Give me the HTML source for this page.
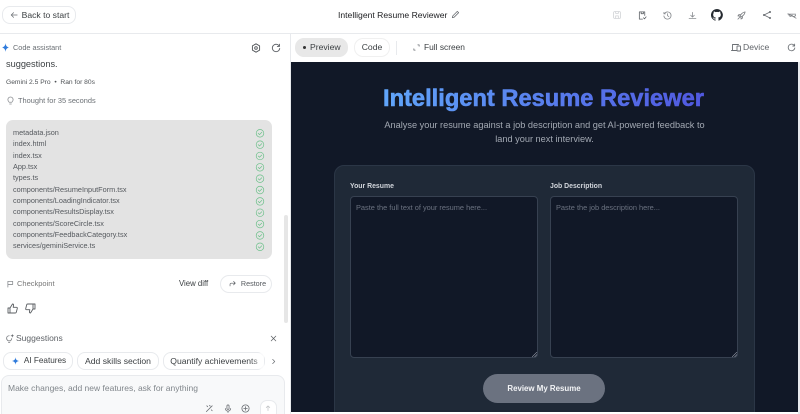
<!DOCTYPE html>
<html><head><meta charset="utf-8"><style>
html,body{margin:0;padding:0;width:800px;height:414px;overflow:hidden;background:#fff}
body{font-family:"Liberation Sans",sans-serif;position:relative}
#w{position:absolute;left:0;top:0;width:800px;height:414px;filter:blur(.3px)}
.a{position:absolute;white-space:nowrap}
svg{position:absolute;fill:none;stroke:#6b6f74;stroke-width:.9;stroke-linecap:round;stroke-linejoin:round}
.btn{position:absolute;box-sizing:border-box;border:1px solid #e8eaed;border-radius:9px;background:#fff;white-space:nowrap;text-align:center;color:#3c4043}
.f{left:13px;font-size:7.3px;color:#55595e;line-height:11px}
.ta{position:absolute;box-sizing:border-box;top:196px;width:188px;height:162px;background:#111827;border:1px solid #374151;border-radius:4px;color:#6b7280;font-size:7.4px;padding:6px 5px;white-space:nowrap}
.lab{position:absolute;top:183px;font-size:6.9px;font-weight:bold;color:#d1d5db;white-space:nowrap}
</style></head><body><div id="w">
<!-- top bar -->
<div class="btn" style="left:2px;top:6px;width:74px;height:18px;line-height:16px;font-size:8.6px;padding-left:13px;border-radius:8px">Back to start</div>
<svg style="left:10px;top:11px" width="8" height="8" viewBox="0 0 10 10"><path d="M9 5H1.500M4.500 2L1.500 5l3 3"/></svg>
<div class="a" style="left:338px;top:10px;font-size:8.6px;color:#202124">Intelligent Resume Reviewer</div>
<svg style="left:451px;top:10px;stroke:#6b6f74" width="9" height="9" viewBox="0 0 10 10"><path d="M1.500 8.500l.5-2L7 1.500 8.500 3 3.500 8z"/></svg>
<!-- top right icons -->
<svg style="left:613px;top:11px;stroke:#d0d2d5" width="8" height="8" viewBox="0 0 9 9"><rect x=".7" y=".7" width="7.600" height="7.600" rx="1"/><path d="M3 .7v2h3v-2M3 8.300V5.500h3v2.800"/></svg>
<svg style="left:638px;top:11px;stroke:#5f6368" width="9" height="9" viewBox="0 0 10 10"><path d="M5 9H1.500V1h6v4M3.500 1v2h2.500V1M6 7.500l1.200 1.200L9 6.500"/></svg>
<svg style="left:663px;top:11px;stroke:#8a8d91" width="9" height="9" viewBox="0 0 10 10"><path d="M1.500 3A4 4 0 1 1 1 5.500M1 1.500V3.200h1.700M5 3v2.200l1.500 1"/></svg>
<svg style="left:688px;top:11px;stroke:#8a8d91" width="9" height="9" viewBox="0 0 10 10"><path d="M5 1.500v5M3 4.700l2 2 2-2M1.200 8.500h7.600"/></svg>
<svg style="left:711px;top:9px;width:12px;height:12px;fill:#24292f;stroke:none" viewBox="0 0 16 16"><path d="M8 0a8 8 0 0 0-2.500 15.600c.4.100.5-.2.500-.4v-1.400c-2.200.5-2.700-1-2.700-1-.4-.9-.9-1.200-.9-1.200-.7-.5.100-.5.100-.5.800.100 1.200.8 1.200.8.700 1.200 1.900.9 2.300.7.100-.5.300-.9.500-1.100-1.800-.2-3.600-.9-3.600-4 0-.9.300-1.600.8-2.100-.1-.2-.4-1 .1-2.100 0 0 .7-.2 2.200.8a7.700 7.700 0 0 1 4 0c1.500-1 2.200-.8 2.200-.8.400 1.100.2 1.900.1 2.100.5.600.8 1.300.8 2.100 0 3.100-1.900 3.700-3.700 3.900.3.300.6.800.6 1.500v2.200c0 .2.100.5.600.4A8 8 0 0 0 8 0z"/></svg>
<svg style="left:737px;top:11px;stroke:#7a7d81" width="9" height="9" viewBox="0 0 10 10"><path d="M3 7c1-3 3-5.500 6-6-.4 3-3 5-6 6zM4 4H2L1 5.500h2M6 6v2l-1.500 1V7M2.500 7.500L1 9"/></svg>
<svg style="left:762px;top:10px;stroke:#6b6f74" width="10" height="10" viewBox="0 0 10 10"><path d="M8 2L2 5l6 3"/><circle cx="8" cy="2" r=".6"/><circle cx="2" cy="5" r=".6"/><circle cx="8" cy="8" r=".6"/></svg>
<svg style="left:787px;top:11px;stroke:#7a7d81" width="10" height="9" viewBox="0 0 11 10"><path d="M1 3l9 5M1 3.500h8.500M2 3.500c0 3 3 3 3.500 1 .5 2 3 2.500 4 0"/></svg>
<div class="a" style="left:0;top:33px;width:800px;height:1px;background:#e8eaed"></div>
<!-- left panel -->
<svg style="left:2px;top:43px;fill:#2f7bdc;stroke:none" width="7" height="9" viewBox="0 0 7 9"><path d="M3.500 0C3.800 2.700 4.600 3.800 7 4.500 4.600 5.200 3.800 6.300 3.500 9 3.200 6.300 2.400 5.200 0 4.500 2.400 3.800 3.200 2.700 3.500 0z"/></svg>
<div class="a" style="left:13px;top:43px;font-size:7.3px;color:#6b7075">Code assistant</div>
<svg style="left:251px;top:43px;stroke:#4f5357" width="10" height="10" viewBox="0 0 10 10"><path d="M5 .8l3.600 2.100v4.200L5 9.200 1.400 7.100V2.900z"/><circle cx="5" cy="5" r="1.300"/></svg>
<svg style="left:271px;top:43px;stroke:#5f6368" width="10" height="10" viewBox="0 0 10 10"><path d="M8.300 3.200A3.700 3.700 0 1 0 8.700 5.500M8.500 1.200v2.200H6.300"/></svg>
<div class="a" style="left:6px;top:59px;font-size:9.200px;color:#3c4043">suggestions.</div>
<div class="a" style="left:6px;top:79px;font-size:6.700px;color:#4f5357">Gemini 2.5 Pro &nbsp;•&nbsp; Ran for 80s</div>
<svg style="left:7px;top:96px;stroke:#8a8d91" width="7" height="9" viewBox="0 0 8 10"><path d="M2.500 7C1.500 6 1 5.200 1 4a3 3 0 0 1 6 0c0 1.200-.5 2-1.500 3zM3 9h2"/></svg>
<div class="a" style="left:18px;top:96px;font-size:7.400px;color:#6b7075">Thought for 35 seconds</div>
<div class="a" style="left:6px;top:120px;width:266px;height:139px;background:#e3e3e3;border-radius:7px"></div>
<div class="a f" style="top:127px">metadata.json</div>
<div class="a f" style="top:138px">index.html</div>
<div class="a f" style="top:150px">index.tsx</div>
<div class="a f" style="top:161px">App.tsx</div>
<div class="a f" style="top:172px">types.ts</div>
<div class="a f" style="top:184px">components/ResumeInputForm.tsx</div>
<div class="a f" style="top:195px">components/LoadingIndicator.tsx</div>
<div class="a f" style="top:206px">components/ResultsDisplay.tsx</div>
<div class="a f" style="top:218px">components/ScoreCircle.tsx</div>
<div class="a f" style="top:229px">components/FeedbackCategory.tsx</div>
<div class="a f" style="top:240px">services/geminiService.ts</div>
<svg style="left:255px;top:127px;stroke:#6cc08a;stroke-width:.7" width="10" height="125" viewBox="0 0 10 125">
<g id="c"><circle cx="5" cy="6.300" r="3.800"/><path d="M3.200 6.300l1.300 1.300 2.300-2.300"/></g>
<use href="#c" y="11.350"/><use href="#c" y="22.700"/><use href="#c" y="34.050"/><use href="#c" y="45.400"/><use href="#c" y="56.750"/><use href="#c" y="68.100"/><use href="#c" y="79.450"/><use href="#c" y="90.800"/><use href="#c" y="102.150"/><use href="#c" y="113.500"/>
</svg>
<div class="a" style="left:284px;top:215px;width:4px;height:108px;background:#e6e6e6;border-radius:2px"></div>
<svg style="left:7px;top:280px;stroke:#8a8d91" width="7" height="8" viewBox="0 0 8 9"><path d="M1 8V1.500h5.500v3.500H1"/></svg>
<div class="a" style="left:17px;top:279px;font-size:7.500px;color:#777">Checkpoint</div>
<div class="a" style="left:179px;top:279px;font-size:7.800px;color:#3c4043">View diff</div>
<div class="btn" style="left:220px;top:275px;width:52px;height:18px;line-height:16px;font-size:7.200px;padding-left:15px;color:#55595e">Restore</div>
<svg style="left:229px;top:280px;stroke:#55595e" width="7" height="7" viewBox="0 0 10 9"><path d="M1.500 8V5.500A1.500 1.500 0 0 1 3 4h6M6.500 1.500L9 4 6.500 6.500"/></svg>
<svg style="left:7px;top:303px;stroke:#5a5e62" width="11" height="11" viewBox="0 0 11 11"><path d="M1 5h2v5H1zM3 5l2.500-4c1 0 1.300.7 1 1.700L6.200 4.300H9.500c.6 0 1 .5.800 1.100l-1 3.800c-.1.500-.5.800-1 .8H3"/></svg>
<svg style="left:25px;top:303px;stroke:#5a5e62" width="11" height="11" viewBox="0 0 11 11"><path d="M10 6H8V1h2zM8 6l-2.500 4c-1 0-1.300-.7-1-1.700l.3-1.600H1.500C.9 6.700.5 6.200.7 5.600l1-3.800c.1-.5.500-.8 1-.8H8"/></svg>
<svg style="left:5px;top:333px;stroke:#7a7d81" width="10" height="11" viewBox="0 0 10 12"><path d="M3 8.500C2 7.800 1.300 6.900 1.300 5.700A2.800 2.800 0 0 1 4.100 3M3.300 10.500h1.500M3 8.500h2.500C6.300 7.800 6.800 7 6.900 6"/><path d="M7.500 1l.5 1.500L9.500 3 8 3.500 7.500 5 7 3.500 5.500 3 7 2.500z" style="fill:#5f6368;stroke:none"/></svg>
<div class="a" style="left:16px;top:333px;font-size:8.500px;color:#5f6368">Suggestions</div>
<svg style="left:270px;top:335px;stroke:#5a5e62" width="7" height="7" viewBox="0 0 9 9"><path d="M1.500 1.500l6 6M7.500 1.500l-6 6"/></svg>
<div class="btn" style="left:3px;top:352px;width:70px;height:18px;line-height:16px;font-size:8.200px;padding-left:14px;border-radius:8px">AI Features</div>
<svg style="left:12px;top:357px;fill:#2f7bdc;stroke:none" width="7" height="8" viewBox="0 0 9 10"><path d="M4.500 0C4.800 3 5.800 4.300 9 5 5.800 5.700 4.800 7 4.500 10 4.200 7 3.200 5.700 0 5 3.200 4.300 4.200 3 4.500 0z"/></svg>
<div class="btn" style="left:77px;top:352px;width:82px;height:18px;line-height:16px;font-size:8.600px;border-radius:8px">Add skills section</div>
<div class="btn" style="left:163px;top:352px;width:102px;height:18px;line-height:16px;font-size:8.600px;border-radius:8px">Quantify achievements</div>
<div class="a" style="left:250px;top:353px;width:14px;height:16px;background:linear-gradient(90deg,rgba(255,255,255,0),rgba(255,255,255,.8))"></div>
<svg style="left:271px;top:358px;stroke:#6b6f74" width="5" height="7" viewBox="0 0 6 8"><path d="M2 1.500L4.500 4 2 6.500"/></svg>
<div class="a" style="left:1px;top:375px;width:284px;height:50px;box-sizing:border-box;border:1px solid #e8eaed;border-radius:8px;background:#f8f9fa"></div>
<div class="a" style="left:8px;top:383px;font-size:8.500px;color:#80868b">Make changes, add new features, ask for anything</div>
<svg style="left:205px;top:404px;stroke:#6b6f74" width="9" height="9" viewBox="0 0 10 10"><path d="M1.500 8.500L8 2M2 2l1 1M7 6.500l1 1M5 1.500l.8.800"/></svg>
<svg style="left:224px;top:404px;stroke:#6b6f74" width="8" height="9" viewBox="0 0 9 10"><rect x="3.300" y="1" width="2.400" height="5" rx="1.200"/><path d="M1.500 5a3 3 0 0 0 6 0M4.500 8v1.500"/></svg>
<svg style="left:241px;top:404px;stroke:#6b6f74" width="9" height="9" viewBox="0 0 10 10"><circle cx="5" cy="5" r="4"/><path d="M5 3v4M3 5h4"/></svg>
<div class="a" style="left:260px;top:400px;width:17px;height:20px;box-sizing:border-box;border:1px solid #e8eaed;border-radius:7px;background:#fff"></div>
<svg style="left:265px;top:405px;stroke:#c4c6c8" width="6" height="6" viewBox="0 0 7 7"><path d="M3.500 6.500V1M1.500 3l2-2 2 2"/></svg>
<!-- preview toolbar -->
<div class="a" style="left:290px;top:34px;width:1px;height:380px;background:#e8eaed"></div>
<div class="a" style="left:295px;top:38px;width:53px;height:19px;background:#e8e8e8;border-radius:9px"></div>
<div class="a" style="left:303px;top:46px;width:3px;height:3px;background:#333;border-radius:50%"></div>
<div class="a" style="left:310px;top:42px;font-size:8.600px;color:#3c4043">Preview</div>
<div class="btn" style="left:354px;top:38px;width:36px;height:19px;line-height:17px;font-size:8.600px;border-color:#f0f0f0">Code</div>
<div class="a" style="left:396px;top:41px;width:1px;height:14px;background:#e8eaed"></div>
<svg style="left:413px;top:44px;stroke:#6b6f74" width="7" height="7" viewBox="0 0 8 8"><path d="M1 5.500V7h1.500M5.500 1H7v1.500"/></svg>
<div class="a" style="left:424px;top:42px;font-size:8.400px;color:#3c4043">Full screen</div>
<svg style="left:731px;top:43px;stroke:#6b6f74" width="10" height="9" viewBox="0 0 10 9"><path d="M1.500 7V1.500h6M.5 7.500h5"/><rect x="6" y="3" width="3.500" height="5" rx=".5"/></svg>
<div class="a" style="left:743px;top:42px;font-size:8.600px;color:#5f6368">Device</div>
<svg style="left:787px;top:43px;stroke:#6b6f74" width="9" height="9" viewBox="0 0 10 10"><path d="M8.300 3.200A3.700 3.700 0 1 0 8.700 5.500M8.500 1.200v2.200H6.300"/></svg>
<!-- preview -->
<div class="a" style="left:291px;top:62px;width:507px;height:350px;background:#111827;overflow:hidden">
<div class="a" style="left:0;width:507px;top:56px;text-align:center;font-size:9.200px;line-height:14.400px;color:#a3a9b3;white-space:normal"><span style="display:block">Analyse your resume against a job description and get AI-powered feedback to</span><span style="display:block">land your next interview.</span></div>
<div class="a" style="left:43px;top:103px;width:421px;height:260px;background:#1f2937;border:1px solid #2b3646;box-sizing:border-box;border-radius:10px"></div>
</div>
<svg style="left:370px;top:80px;stroke:none;overflow:visible" width="350" height="36" viewBox="0 0 350 36"><defs><linearGradient id="g" gradientUnits="userSpaceOnUse" x1="13" y1="0" x2="334" y2="0"><stop offset="0" stop-color="#60a5fa"/><stop offset="1" stop-color="#5058e0"/></linearGradient></defs><text x="13" y="26" font-family="Liberation Sans" font-size="24" font-weight="bold" fill="url(#g)" stroke="url(#g)" stroke-width=".6" textLength="321" lengthAdjust="spacingAndGlyphs">Intelligent Resume Reviewer</text></svg>
<div class="lab" style="left:350px">Your Resume</div>
<div class="lab" style="left:550px">Job Description</div>
<div class="ta" style="left:350px">Paste the full text of your resume here...</div>
<div class="ta" style="left:550px">Paste the job description here...</div>
<svg style="left:532px;top:352px;stroke:#9ca3af;stroke-width:.6" width="5" height="5" viewBox="0 0 5 5"><path d="M0 5L5 0M2.500 5L5 2.500"/></svg>
<svg style="left:732px;top:352px;stroke:#9ca3af;stroke-width:.6" width="5" height="5" viewBox="0 0 5 5"><path d="M0 5L5 0M2.500 5L5 2.500"/></svg>
<div class="a" style="left:483px;top:374px;width:122px;height:29px;line-height:29px;border-radius:15px;background:#6b7280;color:#f3f4f6;text-align:center;font-size:7.900px;font-weight:bold">Review My Resume</div>
<div class="a" style="left:798px;top:62px;width:2px;height:352px;background:#e8eaed"></div>
</div></body></html>
